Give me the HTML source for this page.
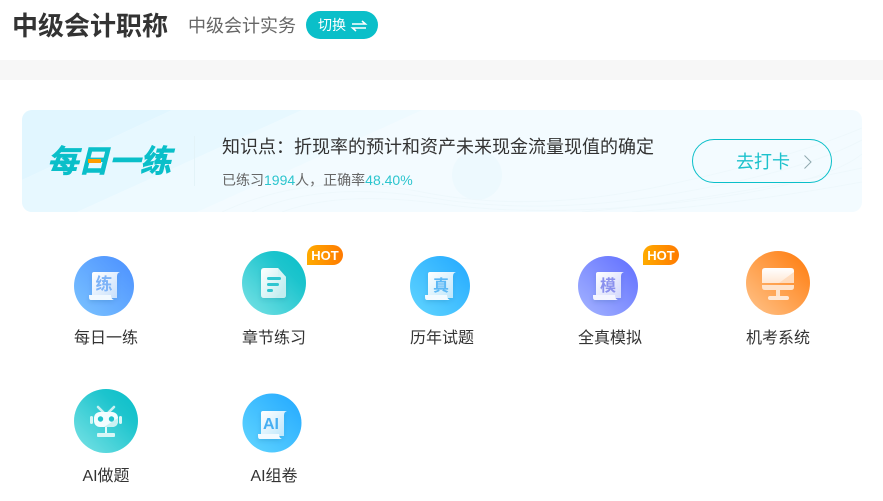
<!DOCTYPE html>
<html lang="zh"><head><meta charset="utf-8">
<style>
html,body{margin:0;padding:0;background:#fff}
body{width:883px;height:501px;position:relative;overflow:hidden;font-family:"Liberation Sans","Noto Sans CJK SC",sans-serif;color:#333}
.a{position:absolute;white-space:nowrap}
.lb{font-size:16px;line-height:24px;color:#333;text-align:center;width:120px}
.hot{position:absolute;width:36px;height:20px;border-radius:10px 10px 10px 0;background:linear-gradient(90deg,#ffab00,#ff7a00);color:#fff;font:bold 13px/21px "Liberation Sans",sans-serif;text-align:center}
svg{position:absolute;overflow:visible}
</style></head><body>
<div class="a" style="left:12px;top:7px;font-size:26px;line-height:38px;font-weight:700;color:#333">中级会计职称</div>
<div class="a" style="left:188px;top:13px;font-size:18px;line-height:26px;color:#666">中级会计实务</div>
<div class="a" style="left:306px;top:11px;width:72px;height:28px;border-radius:14px;background:#0abfc9"></div>
<div class="a" style="left:318px;top:15px;font-size:14px;line-height:20px;color:#fff">切换</div>
<svg style="left:352px;top:20px" width="14" height="12" viewBox="0 0 14 12"><path d="M0 4H13.500L10 1M14 8H.5L4 11" fill="none" stroke="#fff" stroke-width="1.500"/></svg>
<div class="a" style="left:0;top:60px;width:883px;height:20px;background:#f7f7f7"></div>

<div class="a" style="left:22px;top:110px;width:840px;height:102px;border-radius:10px;overflow:hidden;background:#f3fbff">
<svg style="left:0;top:0" width="840" height="102" viewBox="0 0 840 102">
<path d="M0 0H150L0 70Z" fill="#e1f6ff"/>
<path d="M150 0H280L55 102H0V70Z" fill="#e7f8ff"/>
<path d="M280 0H400L175 102H55Z" fill="#eefaff"/>
<circle cx="455" cy="65" r="25" fill="#edf9fe"/>
<g fill="none" stroke="#eef8fc" stroke-width="1">
<path d="M200 102Q290 60 400 82T640 76T840 18"/>
<path d="M230 102Q300 70 410 88T650 84T840 30"/>
<path d="M260 102Q320 80 420 94T660 92T840 44"/>
<path d="M560 102Q680 92 840 58"/>
<path d="M610 102Q720 94 840 72"/>
</g>
</svg>
</div>
<div class="a" style="left:47px;top:142px;font-size:31px;line-height:40px;font-weight:700;font-style:italic;color:#0abfc9;-webkit-text-stroke:.7px #0abfc9">每日一练</div>
<div class="a" style="left:88px;top:159px;width:13px;height:4px;background:#ff9d00"></div>
<div class="a" style="left:194px;top:136px;width:1px;height:50px;background:#e3f3f8"></div>
<div class="a" style="left:222px;top:134px;font-size:18px;line-height:26px;color:#333">知识点：折现率的预计和资产未来现金流量现值的确定</div>
<div class="a" style="left:222px;top:170px;font-size:14px;line-height:20px;color:#666">已练习<span style="color:#2cc5ce">1994</span>人，正确率<span style="color:#2cc5ce">48.40%</span></div>
<div class="a" style="left:692px;top:139px;width:138px;height:42px;border:1px solid #0abfc9;border-radius:22px"></div>
<div class="a" style="left:736px;top:149px;font-size:18px;line-height:26px;color:#1cc2cc">去打卡</div>
<svg style="left:803px;top:154px" width="10" height="16" viewBox="0 0 10 16"><path d="M1.500 1.500L8 8L1.500 14.500" fill="none" stroke="#8fa8ae" stroke-width="1"/></svg>

<svg style="left:0;top:0" width="883" height="501" viewBox="0 0 883 501">
<defs>
<linearGradient id="g1" x1="0" y1="1" x2="1" y2="0"><stop offset="0" stop-color="#7cc4ff"/><stop offset="1" stop-color="#4a8fff"/></linearGradient>
<linearGradient id="g2" x1="0" y1="1" x2="1" y2="0"><stop offset="0" stop-color="#7ce3e6"/><stop offset=".7" stop-color="#1cc4cd"/><stop offset="1" stop-color="#0abfc9"/></linearGradient>
<linearGradient id="g3" x1="0" y1="1" x2="1" y2="0"><stop offset="0" stop-color="#62d6ff"/><stop offset="1" stop-color="#22a8ff"/></linearGradient>
<linearGradient id="g4" x1="0" y1="1" x2="1" y2="0"><stop offset="0" stop-color="#a5b5ff"/><stop offset="1" stop-color="#5f6dff"/></linearGradient>
<linearGradient id="g5" x1="0" y1="1" x2="1" y2="0"><stop offset="0" stop-color="#ffc48c"/><stop offset="1" stop-color="#ff7a0a"/></linearGradient>
<linearGradient id="w" x1="0" y1="0" x2="1" y2="1"><stop offset="0" stop-color="#fff"/><stop offset="1" stop-color="#fff" stop-opacity=".62"/></linearGradient>
<linearGradient id="m" x1="0" y1="0" x2="0" y2="1"><stop offset="0" stop-color="#fff"/><stop offset="1" stop-color="#ffe7d3"/></linearGradient>
<filter id="sh" x="-30%" y="-30%" width="160%" height="160%"><feDropShadow dx="0" dy="2" stdDeviation="2" flood-color="#003a60" flood-opacity=".14"/></filter>
</defs>
<circle cx="104" cy="286" r="30" fill="url(#g1)"/>
<circle cx="274" cy="283" r="32" fill="url(#g2)"/>
<circle cx="440" cy="286" r="30" fill="url(#g3)"/>
<circle cx="608" cy="286" r="30" fill="url(#g4)"/>
<circle cx="778" cy="283" r="32" fill="url(#g5)"/>
<circle cx="106" cy="421" r="32" fill="url(#g2)"/>
<circle cx="272" cy="423" r="29.500" fill="url(#g3)"/>

<!-- scrolls -->
<g filter="url(#sh)"><path d="M94 272H120Q117 273 117 276V298H92V274Q92 272 94 272Z" fill="url(#w)"/><path d="M89 295H111Q111 299 114 300H91Q89 300 89 297Z" fill="#f2f9ff"/></g>
<g filter="url(#sh)"><path d="M430 272H456Q453 273 453 276V298H428V274Q428 272 430 272Z" fill="url(#w)"/><path d="M425 295H447Q447 299 450 300H427Q425 300 425 297Z" fill="#f2faff"/></g>
<g filter="url(#sh)"><path d="M598 272H624Q621 273 621 276V298H596V274Q596 272 598 272Z" fill="url(#w)"/><path d="M593 295H615Q615 299 618 300H595Q593 300 593 297Z" fill="#f4f5ff"/></g>
<g filter="url(#sh)"><path d="M263 411H287Q284 412 284 415V436H261V413Q261 411 263 411Z" fill="url(#w)"/><path d="M258 434H279Q279 438 282 439H260Q258 439 258 436Z" fill="#f2faff"/></g>
<text x="104" y="290" font-size="17" font-weight="700" fill="#7db3f8" text-anchor="middle" font-family="'Noto Sans CJK SC',sans-serif">练</text>
<text x="441" y="291" font-size="16" font-weight="700" fill="#5cb8f5" text-anchor="middle" font-family="'Noto Sans CJK SC',sans-serif">真</text>
<text x="608" y="291" font-size="16" font-weight="700" fill="#8a90ee" text-anchor="middle" font-family="'Noto Sans CJK SC',sans-serif">模</text>
<text x="271" y="429" font-size="16" font-weight="700" fill="#45aef2" text-anchor="middle" font-family="'Liberation Sans',sans-serif">AI</text>

<!-- doc -->
<g filter="url(#sh)">
<path d="M264 268H278L286 277V295Q286 298 283 298H264Q261 298 261 295V271Q261 268 264 268Z" fill="url(#w)"/>
<path d="M278 268L286 277H280Q278 277 278 275Z" fill="#d6f4f4"/>
<path d="M275 298L286 286V295Q286 298 283 298Z" fill="#c5eeef" opacity=".8"/>
</g>
<rect x="267" y="277" width="14" height="3" rx="1.500" fill="#2fc6d0"/>
<rect x="267" y="283" width="12" height="3" rx="1.500" fill="#2fc6d0"/>
<rect x="267" y="289" width="6" height="3" rx="1.500" fill="#2fc6d0"/>

<!-- monitor -->
<path d="M765 268H791Q794 268 794 271V283H762V271Q762 268 765 268Z" fill="url(#m)"/>
<path d="M794 272V283H779Z" fill="#ffd5b3" opacity=".75"/>
<path d="M762 285H794V287Q794 290 791 290H765Q762 290 762 287Z" fill="#ffe3cb"/>
<rect x="776" y="290" width="4" height="7" fill="#ffe3cb"/>
<rect x="768" y="296" width="21" height="4" rx="2" fill="#ffe8d5"/>

<!-- robot -->
<path d="M98 407L104 413M114 407L108 413" stroke="#c9f1f2" stroke-width="2.600" stroke-linecap="round"/>
<rect x="90" y="416" width="3" height="8" rx="1.500" fill="#d8f6f6"/>
<rect x="119" y="416" width="3" height="8" rx="1.500" fill="#d8f6f6"/>
<rect x="94" y="412" width="24" height="15" rx="6" fill="#f2fdff"/>
<path d="M118 418V421Q118 427 112 427H104Z" fill="#c9f1f2"/>
<circle cx="100.500" cy="419" r="2.700" fill="#1fc3cc"/>
<circle cx="111.500" cy="419" r="2.700" fill="#1fc3cc"/>
<rect x="105" y="427" width="2" height="7" fill="#e6fbfb"/>
<rect x="97" y="433" width="18" height="4" rx="1" fill="#d8f6f6"/>
</svg>

<div class="hot" style="left:307px;top:245px">HOT</div>
<div class="hot" style="left:643px;top:245px">HOT</div>
<div class="a lb" style="left:46px;top:327px">每日一练</div>
<div class="a lb" style="left:214px;top:327px">章节练习</div>
<div class="a lb" style="left:382px;top:327px">历年试题</div>
<div class="a lb" style="left:550px;top:327px">全真模拟</div>
<div class="a lb" style="left:718px;top:327px">机考系统</div>
<div class="a lb" style="left:46px;top:465px">AI做题</div>
<div class="a lb" style="left:214px;top:465px">AI组卷</div>
</body></html>
